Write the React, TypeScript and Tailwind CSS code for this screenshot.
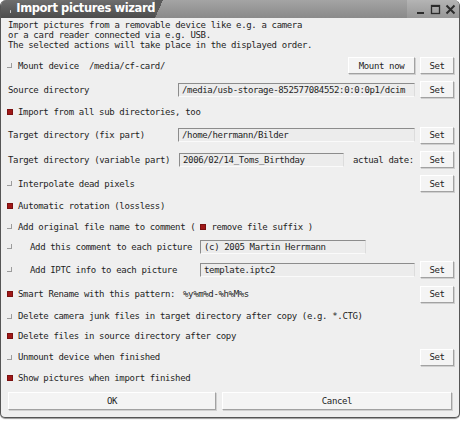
import React from 'react';

const mono = "font-['DejaVu_Sans_Mono','Liberation_Mono',monospace] text-[9px] tracking-[-0.35px] text-[#1e1e1e] whitespace-pre leading-[10px]";

const Box = ({ checked }: { checked?: boolean }) => (
  <div className="w-[12px] flex items-center">
    {checked ? (
      <div className="ml-[1px] w-[6px] h-[6px] bg-[#a01818] border border-[#7a1010]" />
    ) : (
      <div className="ml-[1px] w-[5px] h-[5px] border-r border-b border-[#9c9c9c]" />
    )}
  </div>
);

const Btn = ({ label, w }: { label: string; w: string }) => (
  <div
    className={`${w} h-[17px] flex items-center justify-center bg-[#f4f4f4] border border-t-white border-l-white border-r-[#a2a2a2] border-b-[#a2a2a2] shadow-[1px_1px_0_#d0d0d0] ${mono}`}
  >
    {label}
  </div>
);

const Field = ({ value, w }: { value: string; w: string }) => (
  <div
    className={`${w} h-[14px] flex items-center px-[3px] bg-[#ececec] border border-t-[#8c8c8c] border-l-[#8c8c8c] border-r-[#dcdcdc] border-b-[#fafafa] overflow-hidden ${mono}`}
  >
    {value}
  </div>
);

const Set = () => <Btn label="Set" w="w-[34px] ml-[5px]" />;

export default function App() {
  return (
    <div className="w-[460px] h-[421px] bg-white">
      <div className="w-[460px] h-[418px] flex flex-col bg-[#efefef] border-x border-b border-[#555] rounded-t-[6px] rounded-b-[5px] shadow-[0_1px_1px_#999] overflow-hidden">
        {/* title bar */}
        <div className="h-[18px] flex shrink-0 bg-gradient-to-b from-[#a4a4a4] to-[#8a8a8a]">
          <div className="w-[154px] flex items-center bg-gradient-to-b from-[#6e6e6e] to-[#4c4c4c]">
            <div className="ml-[9px] w-[3px] h-[3px] rounded-full bg-[#cfcfcf] mt-[4px]" />
            <span className="ml-[6px] font-['DejaVu_Sans',sans-serif] font-bold text-[11.5px] tracking-[-0.4px] text-white whitespace-nowrap">
              Import pictures wizard
            </span>
          </div>
          <div className="w-[8px] bg-[linear-gradient(to_bottom_right,#5a5a5a_50%,transparent_50%)]" />
          <div className="flex-1" />
          <div className="w-[52px] flex items-center justify-end gap-[4px] pr-[3px] bg-gradient-to-b from-[#b4b4b4] to-[#979797]">
            <svg width="11" height="11" viewBox="0 0 11 11">
              <rect x="2" y="8" width="7" height="2" fill="#2c2c2c" />
            </svg>
            <svg width="11" height="11" viewBox="0 0 11 11">
              <rect x="1.5" y="1.5" width="8" height="8" fill="none" stroke="#2c2c2c" strokeWidth="1.3" />
              <rect x="1.5" y="1.5" width="8" height="1.5" fill="#2c2c2c" />
            </svg>
            <svg width="11" height="11" viewBox="0 0 11 11">
              <path d="M1.5 1.5 L9.5 9.5 M9.5 1.5 L1.5 9.5" stroke="#2c2c2c" strokeWidth="2" />
            </svg>
          </div>
        </div>

        {/* intro */}
        <div className={`pl-[7px] pt-[2px] ${mono}`}>
          <div>Import pictures from a removable device like e.g. a camera</div>
          <div>or a card reader connected via e.g. USB.</div>
          <div>The selected actions will take place in the displayed order.</div>
        </div>

        <div className="flex flex-col pl-[5px] pr-[5px] mt-[3px]">
          {/* mount */}
          <div className="h-[25px] flex items-center">
            <Box />
            <span className={mono}>Mount device  /media/cf-card/</span>
            <div className="flex-1" />
            <Btn label="Mount now" w="w-[67px]" />
            <Set />
          </div>

          <div className="h-[23px] flex items-center">
            <span className={`ml-[2px] w-[170px] ${mono}`}>Source directory</span>
            <Field value="/media/usb-storage-852577084552:0:0:0p1/dcim" w="w-[237px]" />
            <Set />
          </div>

          <div className="h-[22px] flex items-center">
            <Box checked />
            <span className={mono}>Import from all sub directories, too</span>
          </div>

          <div className="h-[24px] flex items-center">
            <span className={`ml-[2px] w-[170px] ${mono}`}>Target directory (fix part)</span>
            <Field value="/home/herrmann/Bilder" w="w-[237px]" />
            <Set />
          </div>

          <div className="h-[25px] flex items-center">
            <span className={`ml-[2px] w-[171px] ${mono}`}>Target directory (variable part)</span>
            <Field value="2006/02/14_Toms_Birthday" w="w-[165px]" />
            <span className={`ml-[9px] ${mono}`}>actual date:</span>
            <div className="flex-1" />
            <Set />
          </div>

          <div className="h-[23px] flex items-center">
            <Box />
            <span className={mono}>Interpolate dead pixels</span>
            <div className="flex-1" />
            <Set />
          </div>

          <div className="h-[22px] flex items-center">
            <Box checked />
            <span className={mono}>Automatic rotation (lossless)</span>
          </div>

          <div className="h-[19px] flex items-center">
            <Box />
            <span className={mono}>Add original file name to comment ( </span>
            <div className="w-[6px] h-[6px] bg-[#a01818] border border-[#7a1010]" />
            <span className={mono}> remove file suffix )</span>
          </div>

          <div className="h-[21px] flex items-center">
            <Box />
            <span className={`ml-[12px] w-[170px] ${mono}`}>Add this comment to each picture</span>
            <Field value="(c) 2005 Martin Herrmann" w="w-[166px]" />
          </div>

          <div className="h-[25px] flex items-center">
            <Box />
            <span className={`ml-[12px] w-[170px] ${mono}`}>Add IPTC info to each picture</span>
            <Field value="template.iptc2" w="w-[215px]" />
            <Set />
          </div>

          <div className="h-[24px] flex items-center">
            <Box checked />
            <span className={`w-[165px] ${mono}`}>Smart Rename with this pattern:</span>
            <span className={mono}>%y%m%d-%h%M%s</span>
            <div className="flex-1" />
            <Set />
          </div>

          <div className="h-[20px] flex items-center">
            <Box />
            <span className={mono}>Delete camera junk files in target directory after copy (e.g. *.CTG)</span>
          </div>

          <div className="h-[20px] flex items-center">
            <Box checked />
            <span className={mono}>Delete files in source directory after copy</span>
          </div>

          <div className="h-[22px] flex items-center">
            <Box />
            <span className={mono}>Unmount device when finished</span>
            <div className="flex-1" />
            <Set />
          </div>

          <div className="h-[20px] flex items-center">
            <Box checked />
            <span className={mono}>Show pictures when import finished</span>
          </div>

          <div className="flex mt-[4px] ml-[2px]">
            <Btn label="OK" w="w-[208px] h-[18px]" />
            <Btn label="Cancel" w="w-[230px] ml-[6px] h-[18px]" />
          </div>
        </div>
      </div>
    </div>
  );
}
